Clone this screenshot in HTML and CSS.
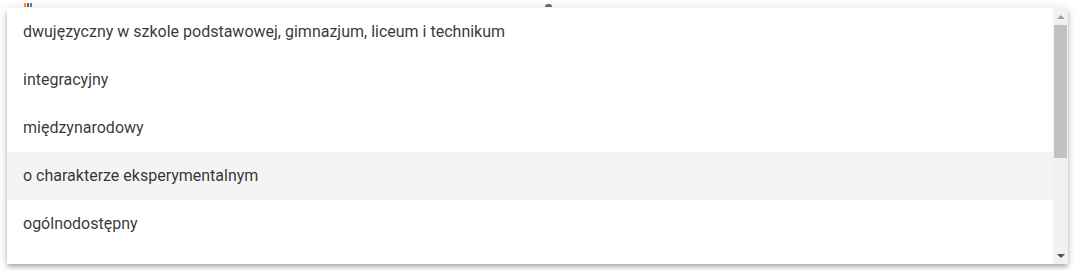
FILE: index.html
```html
<!DOCTYPE html>
<html lang="pl">
<head>
<meta charset="utf-8">
<link rel="stylesheet" href="styles.css">
</head>
<body>
<div class="under">
  <span class="frag frag-a"><i class="c1"></i><i class="c2"></i><i class="c3"></i></span>
  <span class="frag frag-b"></span>
</div>
<div class="panel">
  <ul class="list">
    <li class="opt">dwujęzyczny w szkole podstawowej, gimnazjum, liceum i technikum</li>
    <li class="opt">integracyjny</li>
    <li class="opt">międzynarodowy</li>
    <li class="opt active">o charakterze eksperymentalnym</li>
    <li class="opt">ogólnodostępny</li>
  </ul>
  <div class="scrollbar">
    <div class="btn"><span class="tri up"></span></div>
    <div class="track"><div class="thumb"></div></div>
    <div class="btn"><span class="tri down"></span></div>
  </div>
</div>
</body>
</html>
```
FILE: styles.css
```css
html, body {
  margin: 0;
  padding: 0;
  background: #ffffff;
  width: 1075px;
  height: 270px;
  overflow: hidden;
  font-family: Roboto, "Noto Sans", sans-serif;
}
.under {
  position: absolute;
  left: 0;
  top: 0;
  width: 1075px;
  height: 10px;
}
.frag {
  position: absolute;
  top: 3px;
  height: 4px;
  display: flex;
  gap: 1px;
}
.frag-a { left: 24px; }
.frag-a i { display: block; width: 2px; height: 4px; }
.c1 { background: #e0a030; }
.c2 { background: #c8402a; }
.c3 { background: #3c7fd8; }
.frag-b {
  left: 545px;
  top: 4px;
  width: 7px;
  height: 3px;
  border-radius: 3px 3px 0 0;
  background: #6a6a7a;
}
.panel {
  position: absolute;
  left: 7px;
  top: 8px;
  width: 1061px;
  height: 256px;
  background: #fff;
  display: flex;
  box-shadow: 0 2px 4px -1px rgba(0,0,0,.2), 0 4px 5px 0 rgba(0,0,0,.14), 0 1px 10px 0 rgba(0,0,0,.12);
  overflow: hidden;
}
.list {
  list-style: none;
  margin: 0;
  padding: 0;
  flex: 1;
  overflow: hidden;
}
.opt {
  height: 48px;
  line-height: 48px;
  padding: 0 16px;
  font-size: 16px;
  color: rgba(0,0,0,.8);
  white-space: nowrap;
}
.opt.active { background: #f4f4f4; }
.scrollbar {
  width: 15px;
  background: #f1f1f1;
  display: flex;
  flex-direction: column;
}
.btn {
  height: 17px;
  display: flex;
  align-items: center;
  justify-content: center;
}
.track {
  flex: 1;
  padding: 0 1px;
}
.thumb {
  height: 133px;
  background: #c1c1c1;
}
.tri {
  width: 0;
  height: 0;
  border-left: 4px solid transparent;
  border-right: 4px solid transparent;
}
.tri.up { border-bottom: 4px solid #a3a3a3; }
.tri.down { border-top: 4px solid #505050; }
```
